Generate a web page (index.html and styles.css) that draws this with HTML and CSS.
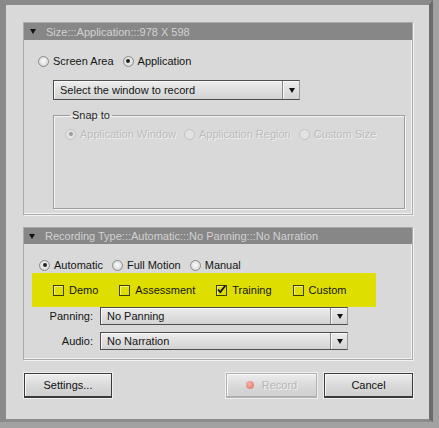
FILE: index.html
```html
<!DOCTYPE html>
<html>
<head>
<meta charset="utf-8">
<link rel="stylesheet" href="styles.css">
</head>
<body>
<div class="window">
  <section class="panel p1">
    <div class="phead"><span class="tri"></span><span class="ptitle">Size:::Application:::978 X 598</span></div>
    <div class="pbody">
      <div class="radios">
        <label class="opt"><span class="radio"></span>Screen Area</label>
        <label class="opt"><span class="radio on"></span>Application</label>
      </div>
      <div class="select sel-window"><span class="stext">Select the window to record</span><span class="sbtn"><span class="arrow"></span></span></div>
      <fieldset class="snap">
        <legend>Snap to</legend>
        <div class="radios dis">
          <label class="opt"><span class="radio on"></span>Application Window</label>
          <label class="opt"><span class="radio"></span>Application Region</label>
          <label class="opt"><span class="radio"></span>Custom Size</label>
        </div>
      </fieldset>
    </div>
  </section>

  <section class="panel p2">
    <div class="phead"><span class="tri"></span><span class="ptitle">Recording Type:::Automatic:::No Panning:::No Narration</span></div>
    <div class="pbody">
      <div class="radios">
        <label class="opt"><span class="radio on"></span>Automatic</label>
        <label class="opt"><span class="radio"></span>Full Motion</label>
        <label class="opt"><span class="radio"></span>Manual</label>
      </div>
      <div class="highlight">
        <label class="chk"><span class="box"></span>Demo</label>
        <label class="chk"><span class="box"></span>Assessment</label>
        <label class="chk"><span class="box on"><svg viewBox="0 0 11 11" width="11" height="11"><path d="M2 5.5 L4.3 8 L9.2 1.8" fill="none" stroke="#111" stroke-width="1.8"/></svg></span>Training</label>
        <label class="chk"><span class="box"></span>Custom</label>
      </div>
      <div class="field">
        <span class="flabel">Panning:</span>
        <div class="select sel-field"><span class="stext">No Panning</span><span class="sbtn"><span class="arrow"></span></span></div>
      </div>
      <div class="field">
        <span class="flabel">Audio:</span>
        <div class="select sel-field"><span class="stext">No Narration</span><span class="sbtn"><span class="arrow"></span></span></div>
      </div>
    </div>
  </section>

  <div class="buttons">
    <button class="btn settings">Settings...</button>
    <span class="spacer"></span>
    <button class="btn record" disabled><span class="dot"></span>Record</button>
    <button class="btn cancel">Cancel</button>
  </div>
</div>
</body>
</html>
```

FILE: styles.css
```css
html, body {
  margin: 0;
  padding: 0;
}
body {
  width: 439px;
  height: 428px;
  overflow: hidden;
  background: #a2a2a2;
  font-family: "Liberation Sans", Arial, sans-serif;
  font-size: 11px;
  color: #151515;
}
.window {
  box-sizing: border-box;
  width: 433px;
  height: 422px;
  background: #d9d9d9;
  border-left: 6px solid #8a8a8a;
  border-top: 5px solid #8a8a8a;
  border-right: 4px solid #6b6b6b;
  border-bottom: 3px solid #8c8c8c;
  padding: 17px 0 0 17px;
}
.panel {
  box-sizing: border-box;
  width: 390px;
  border: 1px solid #ababab;
  box-shadow: inset -1px -1px 0 #f2f2f2, 1px 1px 0 #f2f2f2;
}
.p2 { margin-top: 12px; }
.phead {
  display: flex;
  align-items: center;
  height: 17px;
  background: #878787;
  color: #d2d2d2;
  padding-left: 6px;
  white-space: nowrap;
}
.p2 .phead { height: 16px; padding-left: 5px; }
.tri {
  width: 0;
  height: 0;
  border-left: 3.5px solid transparent;
  border-right: 3.5px solid transparent;
  border-top: 5px solid #111;
  margin-right: 10px;
}
.p1 .pbody { padding: 14px 0 5px 14px; }
.p2 .pbody { padding: 14px 0 9px 15px; }

.radios {
  display: flex;
  align-items: center;
  height: 14px;
  gap: 9px;
  white-space: nowrap;
}
.opt {
  display: flex;
  align-items: center;
  gap: 4px;
}
.radio {
  box-sizing: border-box;
  width: 11px;
  height: 11px;
  border-radius: 50%;
  border: 1px solid #8a8a8a;
  background: radial-gradient(circle at 50% 45%, #fbfbfb 0, #e2e2e2 55%, #c9c9c9 100%);
  display: flex;
  align-items: center;
  justify-content: center;
}
.radio.on::after {
  content: "";
  width: 4px;
  height: 4px;
  border-radius: 50%;
  background: #222;
}
.dis {
  color: #bcbcbc;
  text-shadow: 1px 1px 0 #f0f0f0;
  gap: 8px;
}
.dis .radio {
  border-color: #c2c2c2;
  background: #e2e2e2;
}
.dis .radio.on::after { background: #9a9a9a; }

.select {
  box-sizing: border-box;
  display: flex;
  align-items: center;
  border: 1px solid #4d4d4d;
  border-right-color: #9a9a9a;
  background: linear-gradient(#ececec, #d3d3d3);
  box-shadow: inset 1px 1px 0 #fafafa;
}
.stext {
  flex: 1;
  padding-left: 6px;
  white-space: nowrap;
}
.sbtn {
  box-sizing: border-box;
  width: 17px;
  height: 100%;
  border-left: 1px solid #8a8a8a;
  box-shadow: inset 1px 0 0 #f7f7f7;
  display: flex;
  align-items: center;
  justify-content: center;
}
.arrow {
  width: 0;
  height: 0;
  border-left: 3.5px solid transparent;
  border-right: 3.5px solid transparent;
  border-top: 5px solid #111;
  margin-left: 1px;
}
.sel-window {
  width: 247px;
  height: 20px;
  margin: 12px 0 0 15px;
}
.snap {
  box-sizing: border-box;
  width: 352px;
  height: 100px;
  margin: 9px 0 0 15px;
  padding: 5px 0 0 11px;
  border: 1px solid #9e9e9e;
  box-shadow: inset 1px 1px 0 #f4f4f4, 1px 1px 0 #f4f4f4;
}
.snap legend {
  padding: 0 2px;
  margin-left: 5px;
  color: #2a2a2a;
  line-height: 13px;
}

.highlight {
  box-sizing: border-box;
  display: flex;
  align-items: center;
  gap: 21px;
  width: 344px;
  height: 34px;
  margin: 1px 0 0 -7px;
  padding-left: 21px;
  background: #dede00;
  white-space: nowrap;
}
.chk {
  display: flex;
  align-items: center;
  gap: 5px;
}
.box {
  box-sizing: border-box;
  width: 11px;
  height: 11px;
  border: 1px solid #3c3c10;
  box-shadow: inset 1px 1px 0 #f3f37a;
  display: flex;
  align-items: center;
  justify-content: center;
  overflow: visible;
}
.box svg { flex: none; margin-top: -1px; }

.field {
  display: flex;
  align-items: center;
  gap: 7px;
  margin-left: -15px;
}
.field + .field { margin-top: 7px; }
.flabel {
  width: 69px;
  text-align: right;
}
.sel-field {
  width: 248px;
  height: 18px;
}

.buttons {
  display: flex;
  align-items: center;
  width: 390px;
  margin-top: 13px;
  gap: 7px;
}
.spacer { flex: 1; }
.btn {
  box-sizing: border-box;
  height: 25px;
  padding: 0;
  font-family: inherit;
  font-size: 11px;
  color: #111;
  border: 1px solid #3a3a3a;
  border-bottom-width: 2px;
  background: linear-gradient(#ededed, #d7d7d7 60%, #d0d0d0);
  box-shadow: 0 0 0 1px #f0f0f0, inset 1px 1px 0 #fbfbfb;
  display: flex;
  align-items: center;
  justify-content: center;
  gap: 5px;
}
.settings { width: 88px; margin-left: 1px; }
.record {
  width: 91px;
  color: #b7b7b7;
  text-shadow: 1px 1px 0 #f2f2f2;
  border-color: #b0b0b0;
}
.cancel { width: 89px; }
.dot {
  width: 8px;
  height: 8px;
  border-radius: 50%;
  background: radial-gradient(circle at 40% 35%, #f2b2a8, #e07060);
  margin-right: 3px;
}
```
